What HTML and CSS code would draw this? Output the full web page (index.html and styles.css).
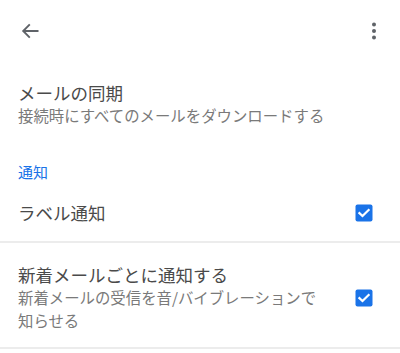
FILE: index.html
```html
<!DOCTYPE html>
<html lang="ja">
<head>
<meta charset="utf-8">
<link rel="stylesheet" href="styles.css">
</head>
<body>
<div class="toolbar">
  <svg class="back" viewBox="0 0 24 24" width="24" height="24"><path d="M20.5 12H5.2M11.8 5.4 5.2 12l6.6 6.6"/></svg>
  <svg class="more" viewBox="0 0 24 24" width="24" height="24"><circle cx="12" cy="5.6" r="2"/><circle cx="12" cy="12" r="2"/><circle cx="12" cy="18.4" r="2"/></svg>
</div>
<div class="item first">
  <div class="title">メールの同期</div>
  <div class="sub">接続時にすべてのメールをダウンロードする</div>
</div>
<div class="header">通知</div>
<div class="row single">
  <div class="text"><div class="title">ラベル通知</div></div>
  <svg class="check" viewBox="0 0 20 20" width="20" height="20"><rect x="1.5" y="1.5" width="17" height="17" rx="2"/><path d="M5.4 10.1 8.5 13 14.6 7"/></svg>
</div>
<div class="divider"></div>
<div class="row double">
  <div class="text">
    <div class="title">新着メールごとに通知する</div>
    <div class="sub wrap">新着メールの受信を音/バイブレーションで知らせる</div>
  </div>
  <svg class="check" viewBox="0 0 20 20" width="20" height="20"><rect x="1.5" y="1.5" width="17" height="17" rx="2"/><path d="M5.4 10.1 8.5 13 14.6 7"/></svg>
</div>
<div class="divider"></div>
</body>
</html>
```
FILE: styles.css
```css
html, body {
  margin: 0;
  padding: 0;
  background: #ffffff;
}
body {
  font-family: "Noto Sans CJK JP", Roboto, sans-serif;
  width: 400px;
  height: 353px;
  overflow: hidden;
}
.toolbar {
  height: 62px;
  display: flex;
  align-items: center;
  justify-content: space-between;
  padding: 0 14px 0 18px;
}
.back {
  display: block;
  fill: none;
  stroke: #5f6368;
  stroke-width: 1.9;
}
.more {
  display: block;
  fill: #5f6368;
}
.item.first {
  padding: 20px 18px 16px 18px;
}
.title {
  font-size: 17.5px;
  line-height: 22px;
  color: #4a4a4a;
}
.sub {
  font-size: 15.4px;
  line-height: 22px;
  color: #7a7a7a;
}
.sub.wrap {
  line-height: 23px;
}
.header {
  padding: 20px 18px 3px 18px;
  font-size: 15px;
  line-height: 20px;
  color: #1a73e8;
}
.row {
  display: flex;
  align-items: center;
  justify-content: space-between;
  padding: 0 26px 0 18px;
}
.row.single {
  min-height: 56px;
}
.row.double {
  padding-top: 21px;
  padding-bottom: 15px;
}
.row .text {
  width: 306px;
}
.check {
  display: block;
  flex: none;
}
.check rect {
  fill: #1a73e8;
}
.check path {
  fill: none;
  stroke: #ffffff;
  stroke-width: 2.2;
  stroke-linecap: square;
}
.divider {
  height: 2px;
  background: #ececec;
}
```
